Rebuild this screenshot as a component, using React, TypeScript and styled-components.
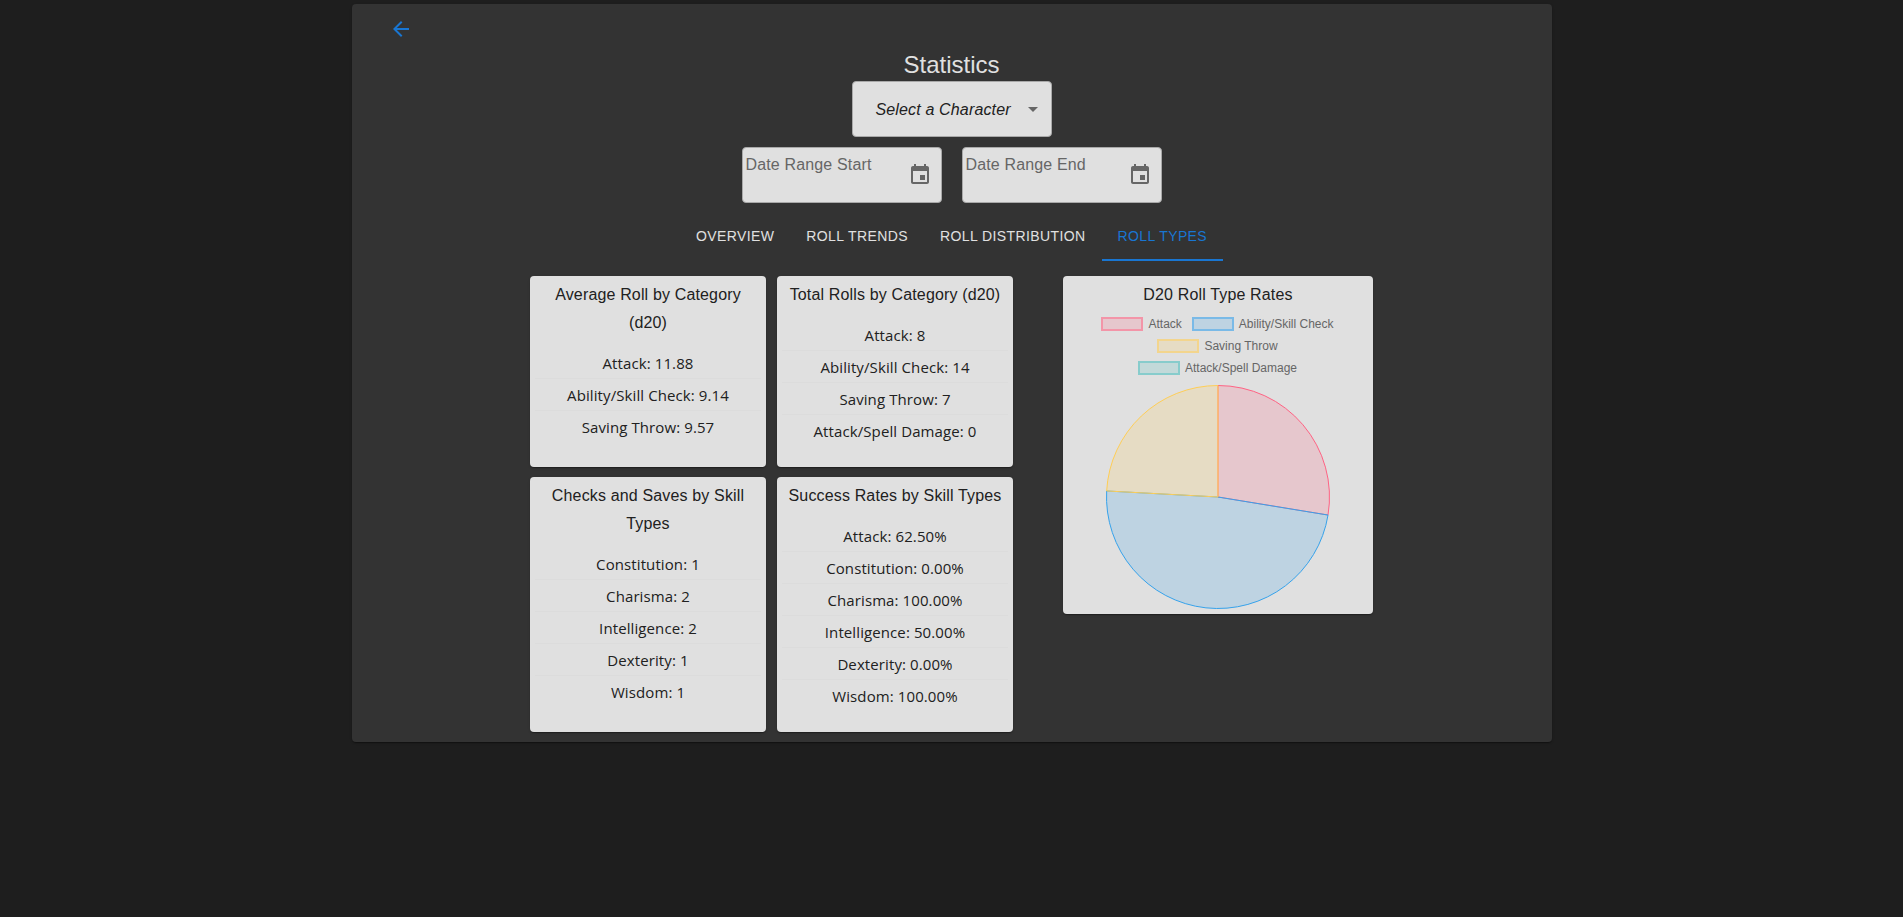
import React from "react";
import styled, { createGlobalStyle } from "styled-components";

const ui = `"Liberation Sans", Arial, sans-serif`;
const body = `"Open Sans", "Noto Sans", sans-serif`;

const GlobalStyle = createGlobalStyle`
  *, *::before, *::after { box-sizing: border-box; }
  body { margin: 0; background: #1e1e1e; color: #e0e0e0; font-family: ${ui}; }
`;

const Page = styled.div`
  min-height: 100vh;
  padding-top: 4px;
`;

const Panel = styled.main`
  width: 1200px;
  height: 738px;
  margin: 0 auto;
  display: flex;
  flex-direction: column;
  align-items: center;
  background: #333333;
  border-radius: 4px;
  box-shadow: 0 2px 1px -1px rgba(0, 0, 0, 0.2), 0 1px 1px rgba(0, 0, 0, 0.14), 0 1px 3px rgba(0, 0, 0, 0.12);
`;

const TopBar = styled.header`
  align-self: stretch;
  height: 45px;
  padding: 13px 0 0 37px;
`;

const BackButton = styled.button`
  display: block;
  border: 0;
  padding: 0;
  width: 24px;
  height: 24px;
  background: none;
  color: #1976d2;
`;

const Icon = styled.svg`
  display: block;
  width: 24px;
  height: 24px;
  fill: currentColor;
`;

const Title = styled.h1`
  margin: 0;
  font-size: 24px;
  font-weight: 400;
  line-height: 32px;
`;

const Field = styled.div`
  width: 200px;
  height: 56px;
  display: flex;
  justify-content: space-between;
  border: 1px solid #a9a9a9;
  border-radius: 4px;
  background: #e0e0e0;
  color: #666666;
  font-size: 16px;
  letter-spacing: 0.15px;
`;

const SelectField = styled(Field)`
  align-items: center;
  padding: 0 6px 0 23px;
`;

const SelectValue = styled.em`
  padding-top: 2px;
  color: #212121;
`;

const DateField = styled(Field)`
  padding: 15px 9px 0 3px;
`;

const DateLabel = styled.span`
  line-height: 23px;
  margin-top: -10px;
`;

const DateRow = styled.div`
  display: flex;
  gap: 20px;
  margin-top: 10px;
`;

const TabBar = styled.nav`
  display: flex;
  height: 48px;
  margin-top: 10px;
`;

const Tab = styled.button<{ $active?: boolean }>`
  border: 0;
  border-bottom: 2px solid ${(p) => (p.$active ? "#1976d2" : "transparent")};
  padding: 1px 16px 0;
  background: none;
  color: ${(p) => (p.$active ? "#1976d2" : "#e0e0e0")};
  font: 400 14px/17px ${ui};
  letter-spacing: 0.4px;
  text-transform: uppercase;
`;

const Content = styled.section`
  display: flex;
  align-items: flex-start;
  gap: 50px;
  margin-top: 15px;
`;

const CardGrid = styled.div`
  display: grid;
  grid-template-columns: 236px 236px;
  grid-template-rows: 191px 255px;
  gap: 10px 11px;
`;

const Card = styled.article`
  padding: 5px 5px 0;
  border-radius: 4px;
  background: #e0e0e0;
  color: #212121;
  text-align: center;
  box-shadow: 0 2px 1px -1px rgba(0, 0, 0, 0.2), 0 1px 1px rgba(0, 0, 0, 0.14), 0 1px 3px rgba(0, 0, 0, 0.12);
`;

const ChartCard = styled(Card)`
  width: 310px;
  height: 338px;
`;

const CardTitle = styled.h2`
  margin: 0;
  font-size: 16px;
  font-weight: 400;
  line-height: 28px;
  letter-spacing: 0.15px;
`;

const StatList = styled.ul`
  list-style: none;
  margin: 10px 0 0;
  padding: 0;
`;

const StatRow = styled.li`
  height: 32px;
  border-bottom: 1px solid #dcdcdc;
  font: 400 15px/33px ${body};
  letter-spacing: 0.1px;

  &:last-child { border-bottom-color: transparent; }
`;

const Legend = styled.div`
  display: flex;
  flex-wrap: wrap;
  justify-content: center;
  gap: 8px 10px;
  width: 250px;
  margin: 8px auto 0;
  padding-right: 1px;
`;

const LegendItem = styled.div`
  display: flex;
  align-items: center;
  gap: 5px;
  height: 14px;
  color: #666666;
  font-size: 12px;
  line-height: 14px;
`;

const Swatch = styled.span<{ $fill: string; $line: string }>`
  width: 42px;
  height: 14px;
  border: 2px solid ${(p) => p.$line};
  background: ${(p) => p.$fill};
`;

const Pie = styled.svg`
  display: block;
  width: 226px;
  height: 226px;
  margin: 9px auto 0;
`;

const cards = [
  { title: "Average Roll by Category (d20)", rows: ["Attack: 11.88", "Ability/Skill Check: 9.14", "Saving Throw: 9.57"] },
  { title: "Total Rolls by Category (d20)", rows: ["Attack: 8", "Ability/Skill Check: 14", "Saving Throw: 7", "Attack/Spell Damage: 0"] },
  { title: "Checks and Saves by Skill Types", rows: ["Constitution: 1", "Charisma: 2", "Intelligence: 2", "Dexterity: 1", "Wisdom: 1"] },
  { title: "Success Rates by Skill Types", rows: ["Attack: 62.50%", "Constitution: 0.00%", "Charisma: 100.00%", "Intelligence: 50.00%", "Dexterity: 0.00%", "Wisdom: 100.00%"] },
];

const series = [
  { label: "Attack", value: 8, rgb: "255, 99, 132" },
  { label: "Ability/Skill Check", value: 14, rgb: "54, 162, 235" },
  { label: "Saving Throw", value: 7, rgb: "255, 206, 86" },
  { label: "Attack/Spell Damage", value: 0, rgb: "75, 192, 192" },
];

const total = series.reduce((sum, s) => sum + s.value, 0);

const slicePath = (from: number, to: number) => {
  const r = 111.5;
  const point = (v: number) => {
    const a = (v / total) * Math.PI * 2 - Math.PI / 2;
    return `${113 + r * Math.cos(a)} ${113 + r * Math.sin(a)}`;
  };
  const large = (to - from) / total > 0.5 ? 1 : 0;
  return `M113 113L${point(from)}A${r} ${r} 0 ${large} 1 ${point(to)}Z`;
};

const slices = series
  .map((s, i) => {
    const from = series.slice(0, i).reduce((sum, x) => sum + x.value, 0);
    return { ...s, d: slicePath(from, from + s.value) };
  })
  .filter((s) => s.value > 0);

const CalendarIcon = () => (
  <Icon viewBox="0 0 24 24">
    <path d="M17 12h-5v5h5v-5zM16 1v2H8V1H6v2H5c-1.11 0-1.99.9-1.99 2L3 19c0 1.1.89 2 2 2h14c1.1 0 2-.9 2-2V5c0-1.1-.9-2-2-2h-1V1h-2zm3 18H5V8h14v11z" />
  </Icon>
);

export default function App() {
  return (
    <Page>
      <GlobalStyle />
      <Panel>
        <TopBar>
          <BackButton aria-label="Back">
            <Icon viewBox="0 0 24 24">
              <path d="M20 11H7.83l5.59-5.59L12 4l-8 8 8 8 1.41-1.41L7.83 13H20v-2z" />
            </Icon>
          </BackButton>
        </TopBar>
        <Title>Statistics</Title>
        <SelectField>
          <SelectValue>Select a Character</SelectValue>
          <Icon viewBox="0 0 24 24">
            <path d="M7 10l5 5 5-5z" />
          </Icon>
        </SelectField>
        <DateRow>
          {["Date Range Start", "Date Range End"].map((label) => (
            <DateField key={label}>
              <DateLabel>{label}</DateLabel>
              <CalendarIcon />
            </DateField>
          ))}
        </DateRow>
        <TabBar>
          <Tab>Overview</Tab>
          <Tab>Roll Trends</Tab>
          <Tab>Roll Distribution</Tab>
          <Tab $active>Roll Types</Tab>
        </TabBar>
        <Content>
          <CardGrid>
            {cards.map((card) => (
              <Card key={card.title}>
                <CardTitle>{card.title}</CardTitle>
                <StatList>
                  {card.rows.map((row) => (
                    <StatRow key={row}>{row}</StatRow>
                  ))}
                </StatList>
              </Card>
            ))}
          </CardGrid>
          <ChartCard>
            <CardTitle>D20 Roll Type Rates</CardTitle>
            <Legend>
              {series.map((s) => (
                <LegendItem key={s.label}>
                  <Swatch $fill={`rgba(${s.rgb}, 0.2)`} $line={`rgba(${s.rgb}, 0.5)`} />
                  {s.label}
                </LegendItem>
              ))}
            </Legend>
            <Pie viewBox="0 0 226 226">
              {slices.map((s) => (
                <path key={s.label} d={s.d} fill={`rgba(${s.rgb}, 0.2)`} stroke={`rgb(${s.rgb})`} strokeWidth="1" />
              ))}
            </Pie>
          </ChartCard>
        </Content>
      </Panel>
    </Page>
  );
}
